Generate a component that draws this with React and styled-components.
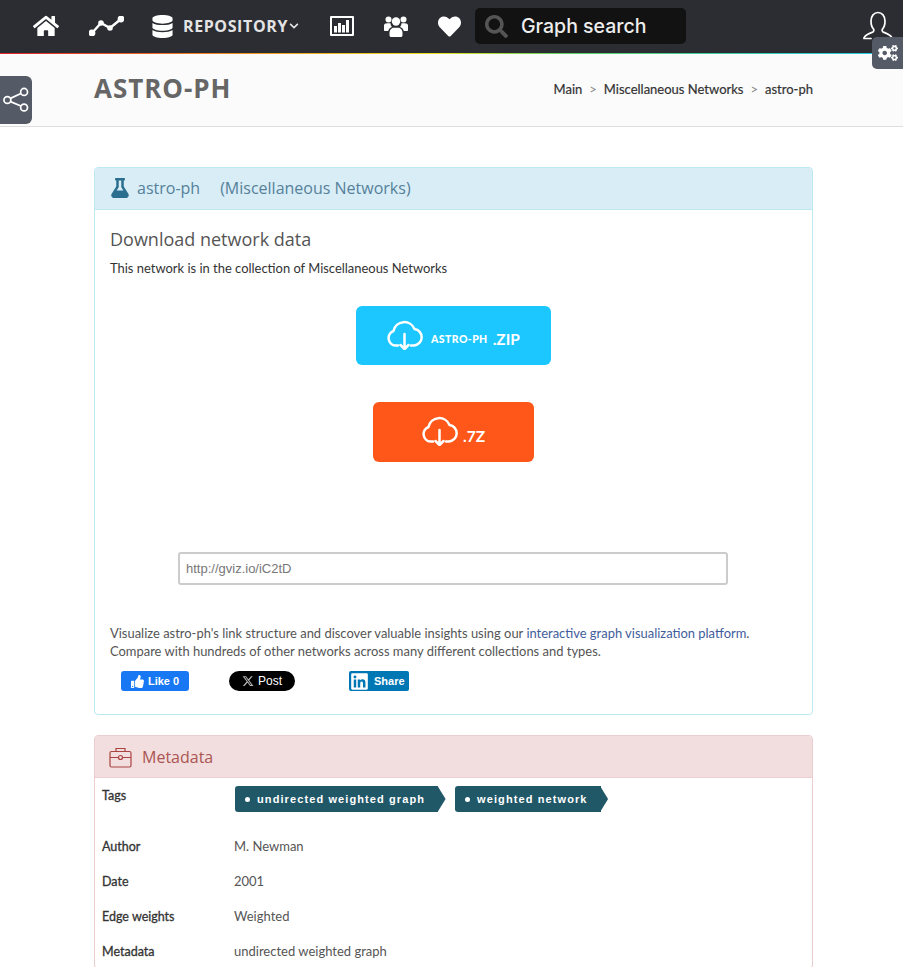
import React from "react";
import styled, { createGlobalStyle } from "styled-components";
import { FaHome, FaDatabase, FaHeart, FaSearch, FaFlask, FaCogs, FaThumbsUp, FaLinkedin, FaChevronDown } from "react-icons/fa";
import { FaXTwitter } from "react-icons/fa6";

const Global = createGlobalStyle`
  html, body { margin: 0; padding: 0; background: #fff; }
  body { font-family: Lato, "Open Sans", sans-serif; }
  * { box-sizing: border-box; }
`;
const Page = styled.div`
  position: relative; width: 903px; height: 967px; overflow: hidden;
`;
const Nav = styled.nav`
  height: 54px; background: #2b2d32; display: flex; align-items: center;
  padding: 0 10px 2px 33px; position: relative;
  &::after {
    content: ""; position: absolute; left: 0; right: 0; bottom: 0; height: 1px;
    background: linear-gradient(90deg, #e0202a 0%, #f08a24 25%, #e8e020 48%, #60d060 62%, #20c8f0 100%);
  }
`;
const NavIcon = styled.span`
  display: flex; align-items: center; color: #fff; margin-right: ${p => p.$mr || 0}px;
  font-size: ${p => p.$size || 24}px;
`;
const RepoLabel = styled.span`
  font: 700 16px "Open Sans", sans-serif; color: #e4e4e4; letter-spacing: 0.6px;
  display: flex; align-items: center; gap: 1px; margin-right: 31px;
`;
const Search = styled.div`
  width: 211px; height: 36px; background: #121212; border-radius: 5px; margin-left: 14px;
  display: flex; align-items: center; padding-left: 10px; gap: 13px; color: #eee;
  font: 500 19.5px Inter, sans-serif;
  svg { color: #555; font-size: 23px; }
`;
const UserIcon = styled.span`
  margin-left: auto; display: flex; color: #fff;
`;
const GearTab = styled.div`
  position: absolute; top: 37px; right: 0; width: 31px; height: 32px; background: #545b66;
  border-radius: 5px 0 0 5px; display: flex; align-items: center; justify-content: center;
  color: #fff; font-size: 20px;
`;
const ShareTab = styled.div`
  position: absolute; top: 76px; left: 0; width: 32px; height: 48px; background: #545b66;
  border-radius: 0 6px 6px 0; display: flex; align-items: center; justify-content: center;
`;
const Header = styled.header`
  height: 73px; background: #fbfbfb; border-bottom: 1px solid #dedede;
  display: flex; align-items: center; justify-content: space-between;
  padding: 0 90px 3px 94px;
`;
const Title = styled.h1`
  margin: 0 0 2px; font: 700 26px "Open Sans", sans-serif; color: #666; letter-spacing: 0.95px;
`;
const Crumbs = styled.div`
  font-size: 13px; color: #333; display: flex; gap: 7px;
  -webkit-text-stroke: 0.2px #333;
`;
const Sep = styled.span`color: #888; -webkit-text-stroke: 0;`;
const Content = styled.main`
  padding: 40px 90px 0 94px;
`;
const Panel = styled.section`
  border: 1px solid ${p => p.$border}; border-radius: 4px; margin-bottom: 20px; background: #fff;
`;
const PanelHead = styled.div`
  height: 42px; background: ${p => p.$bg}; color: ${p => p.$color};
  border-bottom: 1px solid ${p => p.$border}; border-radius: 3px 3px 0 0;
  display: flex; align-items: center;
  padding: ${p => p.$pt ?? 0}px 0 ${p => p.$pb ?? 2}px ${p => p.$pad || 15}px;
  font: 400 16px "Open Sans", sans-serif;
  gap: ${p => p.$gap || 7}px;
`;
const HeadNote = styled.span`margin-left: 13px;`;
const DownloadBody = styled.div`
  padding: 17px 15px 0; height: 504px; display: flex; flex-direction: column;
`;
const SubTitle = styled.h3`
  margin: 0 0 8px; font: 400 18px "Open Sans", sans-serif; color: #555; line-height: 24px;
`;
const Small = styled.p`
  margin: 0; font-size: 12.95px; line-height: 18px; color: ${p => p.$c || "#333"};
`;
const Btn = styled.a`
  align-self: center; width: ${p => p.$w}px; height: ${p => p.$h}px; background: ${p => p.$bg};
  margin-top: ${p => p.$mt}px; border-radius: 6px; color: #fff; display: flex; align-items: center;
  justify-content: center; gap: 8px; font: 700 14px Lato, sans-serif;
  svg { margin-top: -4px; }
`;
const SmallCaps = styled.span`font-size: 10.5px; font-weight: 900; letter-spacing: 0.4px; padding-top: 7px;`;
const Ext = styled.span`font-size: 15.5px; font-weight: 700; margin-left: -3px; padding-top: 7px;`;
const UrlInput = styled.div`
  align-self: center; width: 550px; height: 33px; margin: 90px 1px 0 0; border: 2px solid #ccc; border-radius: 3px;
  display: flex; align-items: center; padding-left: 6px; font: 13px "Liberation Sans", sans-serif; color: #777;
`;
const Para = styled.div`margin-top: 39px;`;
const Link = styled.span`color: #3f5d9c;`;
const Social = styled.div`
  display: flex; align-items: center; margin: 11px 0 0 11px;
`;
const Like = styled.div`
  width: 68px; height: 20px; background: #1877f2; color: #fff; border-radius: 3px; font: 700 11px "Liberation Sans", sans-serif;
  display: flex; align-items: center; justify-content: center; gap: 4px;
  margin-right: 40px;
`;
const Post = styled.div`
  width: 66px; height: 20px; background: #000; color: #fff; border-radius: 10px; font: 500 12px "Liberation Sans", sans-serif;
  display: flex; align-items: center; justify-content: center; gap: 4px; margin-right: 54px;
  svg { color: #bbb; }
`;
const Share = styled.div`
  width: 60px; height: 20px; background: #0077b5; color: #fff; border-radius: 2px; font: 700 11px "Liberation Sans", sans-serif;
  display: flex; align-items: center; gap: 5px; padding-left: 1px;
`;
const Rows = styled.div`padding: 8px 7px 0;`;
const Row = styled.div`
  display: grid; grid-template-columns: 132px 1fr; height: ${p => p.$h || 35}px; align-items: ${p => p.$top ? "start" : "center"};
  font-size: 13px;
`;
const Label = styled.div`
  color: #333; -webkit-text-stroke: 0.3px #333; font-size: 12.5px; padding-top: 2px;
`;
const Value = styled.div`color: #555;`;
const Tags = styled.div`display: flex; gap: 17px; margin-left: 1px;`;
const Tag = styled.span`
  height: 26px; background: #215868; color: #fff; border-radius: 3px 0 0 3px; position: relative;
  display: flex; align-items: center; padding: 0 13px 0 10px;
  font: 700 11px "Liberation Sans", sans-serif; letter-spacing: 1.1px;
  &::before { content: ""; width: 5px; height: 5px; border-radius: 50%; background: #fff; margin-right: 7px; }
  &::after {
    content: ""; position: absolute; left: calc(100% - 0.5px); top: 0; width: 8px; height: 26px; background: #215868;
    clip-path: polygon(0 0, 100% 50%, 0 100%);
  }
`;

const Cloud = () => (
  <svg width={36} height={32} viewBox="0 -2 36 32" fill="none" stroke="#fff" strokeWidth="2.5" strokeLinecap="round" strokeLinejoin="round">
    <path d="M11 25.5H8.5A7.5 7.5 0 0 1 6.5 11A11 11 0 0 1 27.5 9A8.3 8.3 0 0 1 27 25.5H24" />
    <path d="M17.5 14v15M13.5 25l4 4 4-4" />
  </svg>
);
const LineChart = () => (
  <svg width="35" height="20" viewBox="0 0 35 20" fill="#fff" stroke="#fff" strokeWidth="2.4">
    <path d="M3 17 12 7l9 5L32 3" fill="none" />
    <circle cx="3" cy="17" r="2.2" /><circle cx="12" cy="7" r="1.6" /><circle cx="21" cy="12" r="1.6" /><circle cx="32" cy="3" r="2.2" />
  </svg>
);
const BarBox = () => (
  <svg width="24" height="20" viewBox="0 0 24 20" fill="#fff">
    <path fillRule="evenodd" d="M0 1a1 1 0 0 1 1-1h22a1 1 0 0 1 1 1v18a1 1 0 0 1-1 1H1a1 1 0 0 1-1-1zM2 2v16h20V2z" />
    <rect x="4" y="10" width="3" height="6.5" /><rect x="8" y="7" width="3" height="9.5" /><rect x="12" y="9" width="3" height="7.5" /><rect x="16" y="4" width="3" height="12.5" />
  </svg>
);
const UsersIco = () => (
  <svg width="24" height="21" viewBox="0 0 24 21" fill="#fff">
    <circle cx="4.5" cy="3.5" r="3" /><circle cx="19.5" cy="3.5" r="3" /><circle cx="12" cy="5.5" r="4.2" />
    <path d="M0 9.5C0 8 1.5 7.2 3 7.2h3.5C6.8 9 7 10 8 11c-2.5 1-3.5 2.5-3.8 4H1c-.6 0-1-.4-1-1zM24 9.5c0-1.5-1.5-2.3-3-2.3h-3.5c-.3 1.8-.5 2.8-1.5 3.8 2.5 1 3.5 2.5 3.8 4H23c.6 0 1-.4 1-1z" />
    <path d="M5.5 17c0-3 2-5.3 4-5.3h5c2 0 4 2.3 4 5.3v2.2c0 1-.8 1.8-1.8 1.8H7.3c-1 0-1.8-.8-1.8-1.8z" />
  </svg>
);
const UserOutline = () => (
  <svg width="30" height="30" viewBox="0 0 30 30" fill="none" stroke="#fff" strokeWidth="1.7" strokeLinecap="round">
    <path d="M1 27c1-3 4-4 9-6 1-1 1-2 .5-3C8.5 16 8 13 8 10c0-5 3-8.5 7-8.5S22 5 22 10c0 3-.5 6-2.5 8-.5 1-.5 2 .5 3 5 2 8 3 9 6" />
    <path d="M1 27.5h7" />
  </svg>
);
const ShareIco = () => (
  <svg width="28" height="28" viewBox="0 0 26 26" fill="none" stroke="#fff" strokeWidth="1.6">
    <circle cx="20.5" cy="5.5" r="3.2" /><circle cx="20.5" cy="20" r="3.2" /><circle cx="5" cy="13" r="3.2" />
    <path d="M7.8 11.5 17.6 7M7.8 14.5 17.6 18.5" />
  </svg>
);
const Briefcase = () => (
  <svg width="23" height="21" viewBox="0 0 23 21" fill="none" stroke="#a94442" strokeWidth="1.2">
    <rect x="1" y="4.5" width="21" height="15.5" rx="1.5" />
    <path d="M7 4.5V1.5h9v3M1 10.5h8M14 10.5h8" />
    <circle cx="11.5" cy="10.5" r="2" />
  </svg>
);

export default function App() {
  return (
    <Page>
      <Global />
      <Nav>
        <NavIcon $size={26} $mr={30}><FaHome /></NavIcon>
        <NavIcon $mr={27}><LineChart /></NavIcon>
        <NavIcon $size={23} $mr={9}><FaDatabase /></NavIcon>
        <RepoLabel>REPOSITORY<FaChevronDown size={10} /></RepoLabel>
        <NavIcon $mr={30}><BarBox /></NavIcon>
        <NavIcon $mr={30}><UsersIco /></NavIcon>
        <NavIcon $size={23}><FaHeart /></NavIcon>
        <Search><FaSearch />Graph search</Search>
        <UserIcon><UserOutline /></UserIcon>
      </Nav>
      <GearTab><FaCogs /></GearTab>
      <ShareTab><ShareIco /></ShareTab>
      <Header>
        <Title>ASTRO-PH</Title>
        <Crumbs>
          <span>Main</span><Sep>&gt;</Sep><span>Miscellaneous Networks</span><Sep>&gt;</Sep><span>astro-ph</span>
        </Crumbs>
      </Header>
      <Content>
        <Panel $border="#bce8f1">
          <PanelHead $bg="#d9edf7" $color="#55819a" $border="#bce8f1">
            <FaFlask color="#2a6f90" size={20} />
            <span>astro-ph</span>
            <HeadNote>(Miscellaneous Networks)</HeadNote>
          </PanelHead>
          <DownloadBody>
            <SubTitle>Download network data</SubTitle>
            <Small>This network is in the collection of Miscellaneous Networks</Small>
            <Btn $w={195} $h={59} $bg="#1cc7ff" $mt={29}>
              <Cloud /><SmallCaps>ASTRO-PH</SmallCaps><Ext>.ZIP</Ext>
            </Btn>
            <Btn $w={161} $h={60} $bg="#ff5719" $mt={37}>
              <Cloud /><Ext>.7Z</Ext>
            </Btn>
            <UrlInput>http://gviz.io/iC2tD</UrlInput>
            <Para>
              <Small $c="#555">Visualize astro-ph's link structure and discover valuable insights using our <Link>interactive graph visualization platform</Link>.</Small>
              <Small $c="#555">Compare with hundreds of other networks across many different collections and types.</Small>
            </Para>
            <Social>
              <Like><FaThumbsUp size={13} />Like 0</Like>
              <Post><FaXTwitter size={12} />Post</Post>
              <Share><FaLinkedin size={19} />Share</Share>
            </Social>
          </DownloadBody>
        </Panel>
        <Panel $border="#ebccd1">
          <PanelHead $bg="#f2dede" $color="#ab5553" $border="#ebccd1" $pad={14} $gap={10} $pb={0} $pt={1}>
            <Briefcase /><span>Metadata</span>
          </PanelHead>
          <Rows>
            <Row $h={42} $top>
              <Label>Tags</Label>
              <Tags>
                <Tag>undirected weighted graph</Tag>
                <Tag>weighted network</Tag>
              </Tags>
            </Row>
            <Row><Label>Author</Label><Value>M. Newman</Value></Row>
            <Row><Label>Date</Label><Value>2001</Value></Row>
            <Row><Label>Edge weights</Label><Value>Weighted</Value></Row>
            <Row><Label>Metadata</Label><Value>undirected weighted graph</Value></Row>
          </Rows>
        </Panel>
      </Content>
    </Page>
  );
}
